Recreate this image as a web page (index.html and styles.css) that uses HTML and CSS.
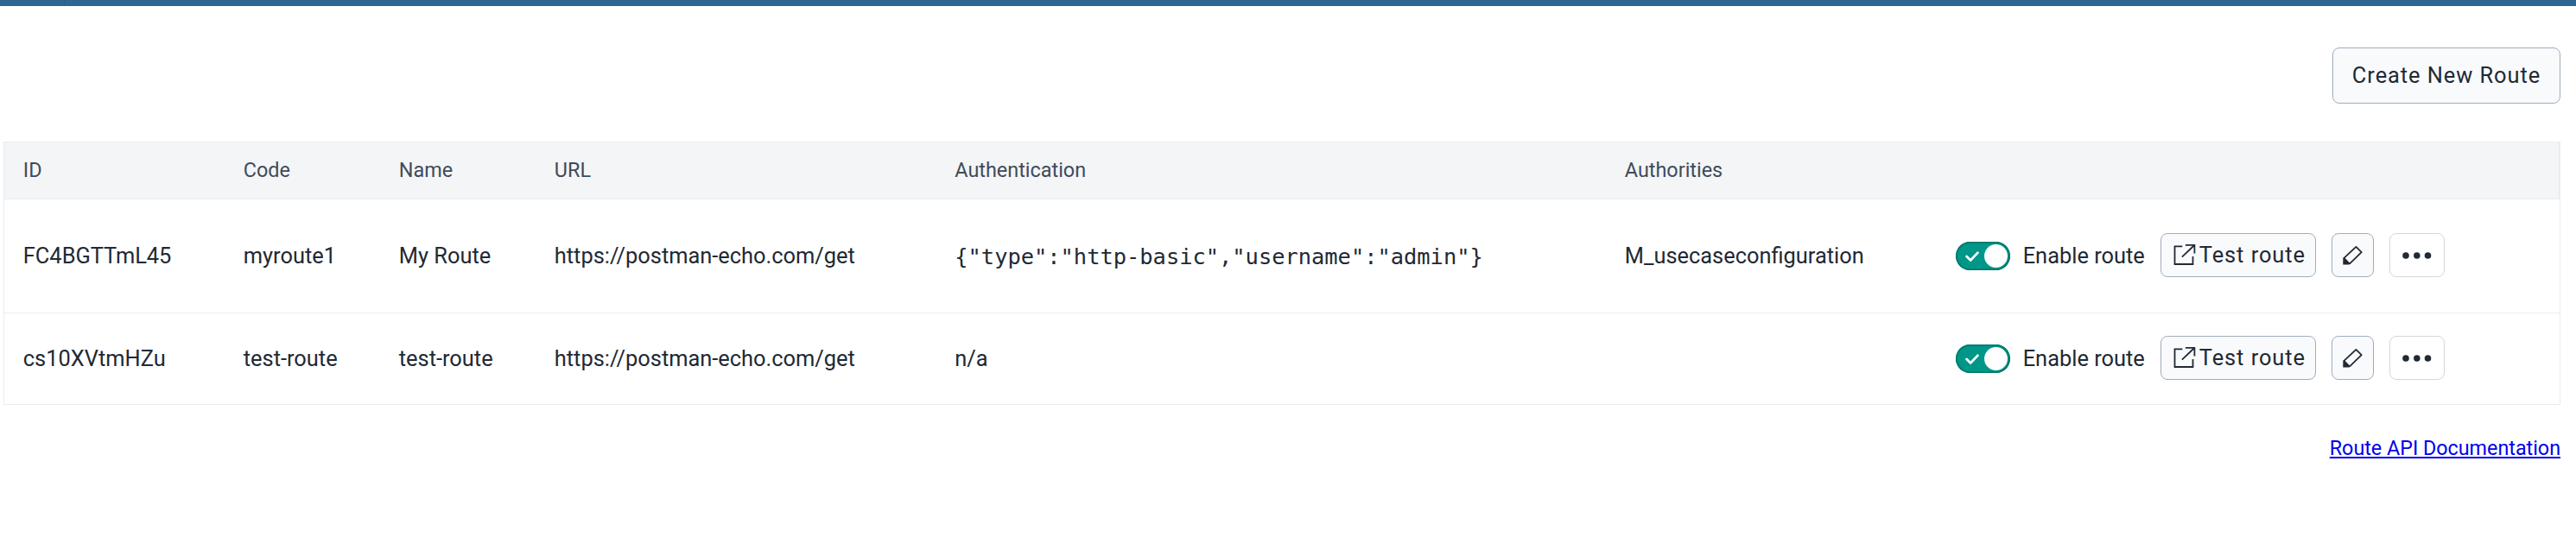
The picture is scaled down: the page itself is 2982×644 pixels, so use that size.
FILE: index.html
```html
<!DOCTYPE html>
<html lang="en">
<head>
<meta charset="utf-8">
<title>Routes</title>
<link rel="stylesheet" href="styles.css">
</head>
<body>
<svg class="sprite" aria-hidden="true">
  <symbol id="launch" viewBox="0 0 29 29">
    <path d="M11.3 4.4H2.5V25H23.5V15.9M14.9 2.8H25.4V12.5M25.2 3L10.9 16.7" fill="none" stroke="#212934" stroke-width="1.8"/>
  </symbol>
  <symbol id="pencil" viewBox="0 0 29 29">
    <path d="M4.2 18.2L18.4 4.9L24.7 11.2L10.8 24.7" fill="none" stroke="#212934" stroke-width="1.8" stroke-linejoin="round"/>
    <path d="M3.3 17.6L5.2 17.4L11.4 23.8L10.4 25.6H3.3Z" fill="#212934"/>
  </symbol>
  <symbol id="check" viewBox="0 0 16 12">
    <path d="M1.6 6L6.1 10.5L14.4 1.8" fill="none" stroke="#fff" stroke-width="2.7" stroke-linecap="round" stroke-linejoin="round"/>
  </symbol>
  <symbol id="dots" viewBox="0 0 34 8">
    <circle cx="4" cy="4" r="3.8" fill="#212934"/><circle cx="16.8" cy="4" r="3.8" fill="#212934"/><circle cx="29.5" cy="4" r="3.8" fill="#212934"/>
  </symbol>
</svg>
<header class="topbar"><div class="topbar-logo"></div></header>
<main class="page">
  <div class="toolbar"><button class="button create">Create New Route</button></div>
  <div class="table">
    <div class="row head">
      <div>ID</div><div>Code</div><div>Name</div><div>URL</div><div>Authentication</div><div>Authorities</div><div></div>
    </div>
    <div class="row first">
      <div>FC4BGTTmL45</div><div>myroute1</div><div>My Route</div><div>https://postman-echo.com/get</div>
      <div class="auth"><code>{"type":"http-basic","username":"admin"}</code></div><div>M_usecaseconfiguration</div>
      <div class="actions">
        <span class="switch"><svg class="check"><use href="#check"/></svg><span class="knob"></span></span>
        <span class="label">Enable route</span>
        <button class="button small test"><svg class="icon"><use href="#launch"/></svg><span class="test-text">Test route</span></button>
        <button class="button small edit"><svg class="icon"><use href="#pencil"/></svg></button>
        <button class="button small more"><svg class="dots"><use href="#dots"/></svg></button>
      </div>
    </div>
    <div class="row second">
      <div>cs10XVtmHZu</div><div>test-route</div><div>test-route</div><div>https://postman-echo.com/get</div>
      <div>n/a</div><div></div>
      <div class="actions">
        <span class="switch"><svg class="check"><use href="#check"/></svg><span class="knob"></span></span>
        <span class="label">Enable route</span>
        <button class="button small test"><svg class="icon"><use href="#launch"/></svg><span class="test-text">Test route</span></button>
        <button class="button small edit"><svg class="icon"><use href="#pencil"/></svg></button>
        <button class="button small more"><svg class="dots"><use href="#dots"/></svg></button>
      </div>
    </div>
  </div>
  <div class="footer"><a class="docs" href="#">Route API Documentation</a></div>
</main>
</body>
</html>
```
FILE: styles.css
```css
* { box-sizing: border-box; }
body {
  margin: 0;
  background: #fff;
  color: #212934;
  font-family: Roboto, sans-serif;
  font-size: 25.4px;
  line-height: 30px;
  white-space: nowrap;
}
.sprite { display: none; }
.topbar { height: 7px; background: #2c6693; }
.topbar-logo { width: 75px; height: 7px; border-right: 1px solid #285c84; }
.page { padding: 48px 18px 0 4px; }
.toolbar { display: flex; justify-content: flex-end; height: 109px; }
.button {
  display: flex;
  align-items: center;
  margin: 0;
  padding: 0;
  border: 1px solid #a0adba;
  border-radius: 8px;
  background: #f9fafc;
  color: #212934;
  font: inherit;
  letter-spacing: 0.95px;
}
.create { width: 264px; height: 65px; justify-content: center; padding-bottom: 2px; }
.table { border: 1px solid #e8edf2; }
.row {
  display: grid;
  grid-template-columns: 255px 180px 180px 463.5px 775.5px 383.5px 1fr;
  align-items: center;
}
.row > div { padding: 0 0 2px 21.8px; }
.head {
  height: 66px;
  border-right: 1px solid #e8edf2;
  border-bottom: 1px solid #e8edf2;
  background: #f3f5f7;
  color: #404b5a;
  font-size: 23.4px;
}
.first { height: 132px; border-bottom: 1px solid #e8edf2; }
.second { height: 105px; }
.row > .auth { padding-top: 1px; padding-bottom: 0; }
code { font-family: "DejaVu Sans Mono", monospace; font-size: 25.4px; }
.row > .actions { display: flex; align-items: center; padding-bottom: 0; }
.switch {
  display: flex;
  align-items: center;
  justify-content: space-between;
  width: 63px;
  height: 33px;
  padding: 0 3px 0 10.5px;
  border-radius: 17px;
  background: #009688;
  box-shadow: inset 0 0 0 1.8px #00796b;
}
.check { width: 16px; height: 12px; }
.knob { width: 27px; height: 27px; border-radius: 50%; background: #fff; }
.label { width: 159.5px; margin-left: 14.4px; padding-bottom: 2px; }
.small { height: 51px; margin-bottom: 2px; }
.test { width: 180px; padding-left: 12.6px; gap: 2px; }
.test-text { padding-bottom: 2px; }
.icon { width: 29px; height: 29px; flex: none; }
.edit { width: 49px; margin-left: 18px; padding-left: 9px; }
.more { width: 64px; margin-left: 18px; padding-left: 14px; border-color: #d5d7dd; background: #fff; }
.dots { width: 34px; height: 8px; }
.footer { display: flex; justify-content: flex-end; padding-top: 35px; font-size: 23.3px; }
.docs { color: #00e; text-decoration: underline; }
```
